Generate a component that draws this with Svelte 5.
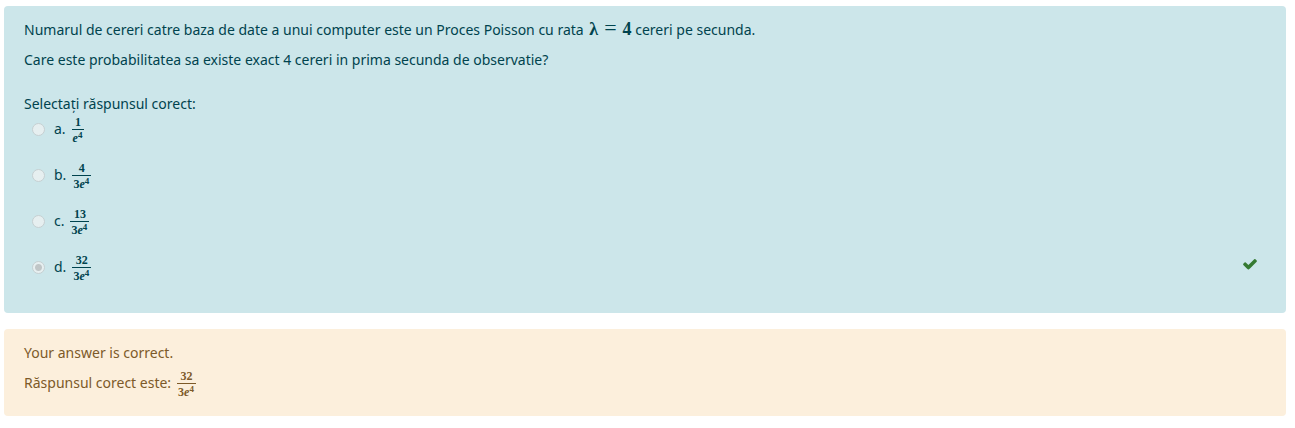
<script>
  const options = [
    { letter: 'a', top: '1', coefficient: '' },
    { letter: 'b', top: '4', coefficient: '3' },
    { letter: 'c', top: '13', coefficient: '3' },
    { letter: 'd', top: '32', coefficient: '3' }
  ];
  const selected = 'd';
</script>

{#snippet fraction(top, coefficient)}
  <span class="fraction">
    <span class="top">{top}</span>
    <span class="bottom">{coefficient}<i>e</i><sup>4</sup></span>
  </span>
{/snippet}

<main>
  <section class="card formulation">
    <p>Numarul de cereri catre baza de date a unui computer este un Proces Poisson cu rata <span class="math">λ<span class="equals">=</span>4</span> cereri pe secunda.</p>
    <p>Care este probabilitatea sa existe exact 4 cereri in prima secunda de observatie?</p>
    <fieldset>
      <legend>Selectați răspunsul corect:</legend>
      {#each options as option}
        <div class="option">
          <input type="radio" name="answer" id="answer-{option.letter}" value={option.letter} checked={option.letter === selected} disabled />
          <label for="answer-{option.letter}"><span>{option.letter}.</span>{@render fraction(option.top, option.coefficient)}</label>
          {#if option.letter === selected}
            <svg class="check" viewBox="0 0 1792 1792" role="img" aria-label="Corect">
              <path d="M1671 566q0 40-28 68l-724 724-136 136q-28 28-68 28t-68-28l-136-136-362-362q-28-28-28-68t28-68l136-136q28-28 68-28t68 28l294 295 656-657q28-28 68-28t68 28l136 136q28 28 28 68z" />
            </svg>
          {/if}
        </div>
      {/each}
    </fieldset>
  </section>

  <section class="card outcome">
    <p>Your answer is correct.</p>
    <p class="right-answer"><span>Răspunsul corect este:</span>{@render fraction('32', '3')}</p>
  </section>
</main>

<style>
  main {
    display: flex;
    flex-direction: column;
    gap: 16px;
    padding: 6px 9px 12px 4px;
    font: 14px/22px "Segoe UI", "Noto Sans", sans-serif;
  }
  .card {
    padding: 12px 20px 14px;
    border-radius: 4px;
  }
  .formulation {
    background: #cce6ea;
    color: #00434e;
  }
  .outcome {
    padding-top: 13px;
    background: #fcefdc;
    color: #7d5a29;
  }
  p {
    margin: 0 0 8px;
  }
  fieldset {
    margin: 22px 0 0;
    padding: 0;
    border: 0;
    min-width: 0;
  }
  legend {
    padding: 0;
  }
  .option {
    display: flex;
    align-items: center;
    height: 28px;
    margin-bottom: 18px;
    padding: 0 8px;
  }
  input {
    appearance: none;
    width: 13px;
    height: 13px;
    margin: 0 9px 0 0;
    border: 1px solid #c6d0d2;
    border-radius: 50%;
    background: #e6eff0;
  }
  input:checked {
    background: radial-gradient(circle, #c0c6c7 0 3px, #e6eff0 4px);
  }
  label {
    display: flex;
    align-items: center;
    gap: 6px;
  }
  .fraction {
    display: inline-flex;
    flex-direction: column;
    align-items: stretch;
    padding-top: 2px;
    font: bold 12px/14px "Liberation Serif", serif;
    text-align: center;
  }
  .top {
    border-bottom: 1px solid currentColor;
  }
  .bottom {
    padding: 1px 2px 0 1px;
  }
  sup {
    font-size: 9px;
    line-height: 1px;
    vertical-align: 4px;
  }
  .math {
    margin-left: 2px;
    font: bold 18px/20px "Liberation Serif", serif;
  }
  .equals {
    margin: 0 6px;
    font-size: 22px;
    font-weight: normal;
    line-height: 20px;
  }
  .check {
    width: 16px;
    height: 16px;
    margin: 0 0 6px auto;
    fill: #357a32;
  }
  .right-answer {
    display: flex;
    align-items: center;
    gap: 6px;
    height: 22px;
  }
</style>
